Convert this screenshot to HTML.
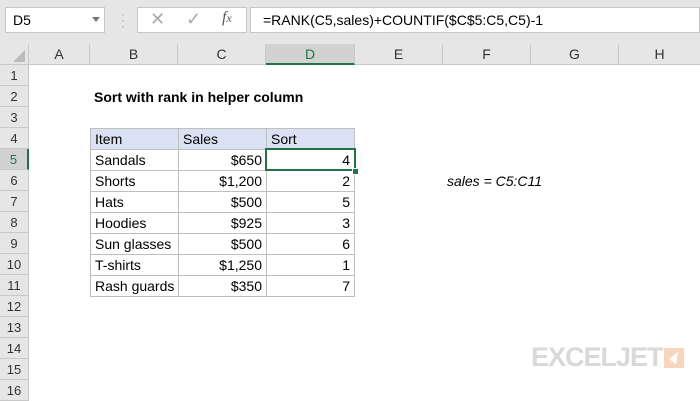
<html><head><style>
body{margin:0;width:700px;height:400px;background:#fff;font-family:"Liberation Sans",Calibri,sans-serif;position:relative;overflow:hidden}
.a{position:absolute}
.top{left:0;top:0;width:700px;height:44px;background:#e6e6e6}
.ch{top:44px;height:21px;background:#e6e6e6;border-right:1px solid #c8c8c8;border-bottom:1px solid #c8c8c8;box-sizing:border-box;text-align:center;font-size:14px;line-height:21px;color:#333}
.rh{left:0;width:29px;height:21px;background:#e6e6e6;border-bottom:1px solid #c8c8c8;border-right:1px solid #c8c8c8;box-sizing:border-box;text-align:center;font-size:13px;line-height:21px;color:#333}
.c{height:21px;font-size:14px;line-height:21px;box-sizing:border-box;padding:0 4px;color:#000;white-space:nowrap}
.t{position:absolute;height:22px;box-sizing:border-box;border:1px solid #bfbfbf;padding:0 4px;line-height:20px;font-size:14px;white-space:nowrap}
.b{left:90px;width:89px}.s{left:178px;width:89px;text-align:right}.d{left:266px;width:89px;text-align:right}
.h{background:#d9e1f2;text-align:left}
</style></head><body>
<div class="a top"></div>
<div class="a" style="left:5px;top:7px;width:100px;height:26px;background:#fff;border:1px solid #c6c6c6;box-sizing:border-box;font-size:14px;line-height:24px;padding-left:7px">D5</div>
<div class="a" style="left:92px;top:17px;width:0;height:0;border-left:4px solid transparent;border-right:4px solid transparent;border-top:5px solid #777"></div>
<div class="a" style="left:121px;top:11px;color:#aaa;font-size:12px;line-height:6px">·<br>·<br>·</div>
<div class="a" style="left:137px;top:7px;width:110px;height:26px;background:#fff;border:1px solid #c6c6c6;box-sizing:border-box"></div>
<div class="a" style="left:150px;top:9px;font-size:18px;color:#aaa">✕</div>
<div class="a" style="left:186px;top:9px;font-size:18px;color:#aaa">✓</div>
<div class="a" style="left:222px;top:9px;font-size:16px;color:#555;font-style:italic;font-family:'Liberation Serif',serif">f<span style="font-size:12px">x</span></div>
<div class="a" style="left:250px;top:7px;width:450px;height:26px;background:#fff;border:1px solid #c6c6c6;box-sizing:border-box;font-size:14px;line-height:24px;padding-left:12px">=RANK(C5,sales)+COUNTIF($C$5:C5,C5)-1</div>
<div class="a ch" style="left:0;width:29px"></div>
<div class="a" style="left:13px;top:50px;width:0;height:0;border-left:12px solid transparent;border-bottom:12px solid #bbb"></div>
<div class="a ch" style="left:29px;width:61px">A</div>
<div class="a ch" style="left:90px;width:88px">B</div>
<div class="a ch" style="left:178px;width:88px">C</div>
<div class="a ch" style="left:266px;width:89px;background:#d2d2d2;border-bottom:2px solid #217346;color:#217346">D</div>
<div class="a ch" style="left:355px;width:88px">E</div>
<div class="a ch" style="left:443px;width:88px">F</div>
<div class="a ch" style="left:531px;width:88px">G</div>
<div class="a ch" style="left:619px;width:81px;border-right:none">H</div>
<div class="a rh" style="top:65px">1</div><div class="a rh" style="top:86px">2</div><div class="a rh" style="top:107px">3</div><div class="a rh" style="top:128px">4</div>
<div class="a rh" style="top:149px;background:#d2d2d2;color:#217346;border-right:2px solid #217346">5</div>
<div class="a rh" style="top:170px">6</div><div class="a rh" style="top:191px">7</div><div class="a rh" style="top:212px">8</div><div class="a rh" style="top:233px">9</div><div class="a rh" style="top:254px">10</div><div class="a rh" style="top:275px">11</div><div class="a rh" style="top:296px">12</div><div class="a rh" style="top:317px">13</div><div class="a rh" style="top:338px">14</div><div class="a rh" style="top:359px">15</div><div class="a rh" style="top:380px">16</div>
<div class="a c" style="left:90px;top:87px;font-weight:bold;font-size:14px">Sort with rank in helper column</div>

<div class="t b h" style="top:128px">Item</div><div class="t s h" style="top:128px">Sales</div><div class="t d h" style="top:128px">Sort</div>
<div class="t b" style="top:149px">Sandals</div><div class="t s" style="top:149px">$650</div><div class="t d" style="top:149px">4</div>
<div class="t b" style="top:170px">Shorts</div><div class="t s" style="top:170px">$1,200</div><div class="t d" style="top:170px">2</div>
<div class="t b" style="top:191px">Hats</div><div class="t s" style="top:191px">$500</div><div class="t d" style="top:191px">5</div>
<div class="t b" style="top:212px">Hoodies</div><div class="t s" style="top:212px">$925</div><div class="t d" style="top:212px">3</div>
<div class="t b" style="top:233px">Sun glasses</div><div class="t s" style="top:233px">$500</div><div class="t d" style="top:233px">6</div>
<div class="t b" style="top:254px">T-shirts</div><div class="t s" style="top:254px">$1,250</div><div class="t d" style="top:254px">1</div>
<div class="t b" style="top:275px">Rash guards</div><div class="t s" style="top:275px">$350</div><div class="t d" style="top:275px">7</div>

<div class="a" style="left:265px;top:148px;width:91px;height:23px;border:2px solid #217346;box-sizing:border-box"></div>
<div class="a" style="left:352px;top:168px;width:5px;height:5px;background:#217346;border:1px solid #fff"></div>
<div class="a c" style="left:443px;top:171px;font-style:italic">sales = C5:C11</div>
<div class="a" style="left:531px;top:342px;font-size:27px;font-weight:900;color:#d9d9d9;letter-spacing:-1px;font-family:'Liberation Sans',sans-serif">EXCELJET</div>
<div class="a" style="left:664px;top:348px;width:20px;height:20px;background:#f8d5bd"><svg width="20" height="20"><path d="M14 4 L5 11 L12 16 Z" fill="#fff"/></svg></div>
</body></html>
